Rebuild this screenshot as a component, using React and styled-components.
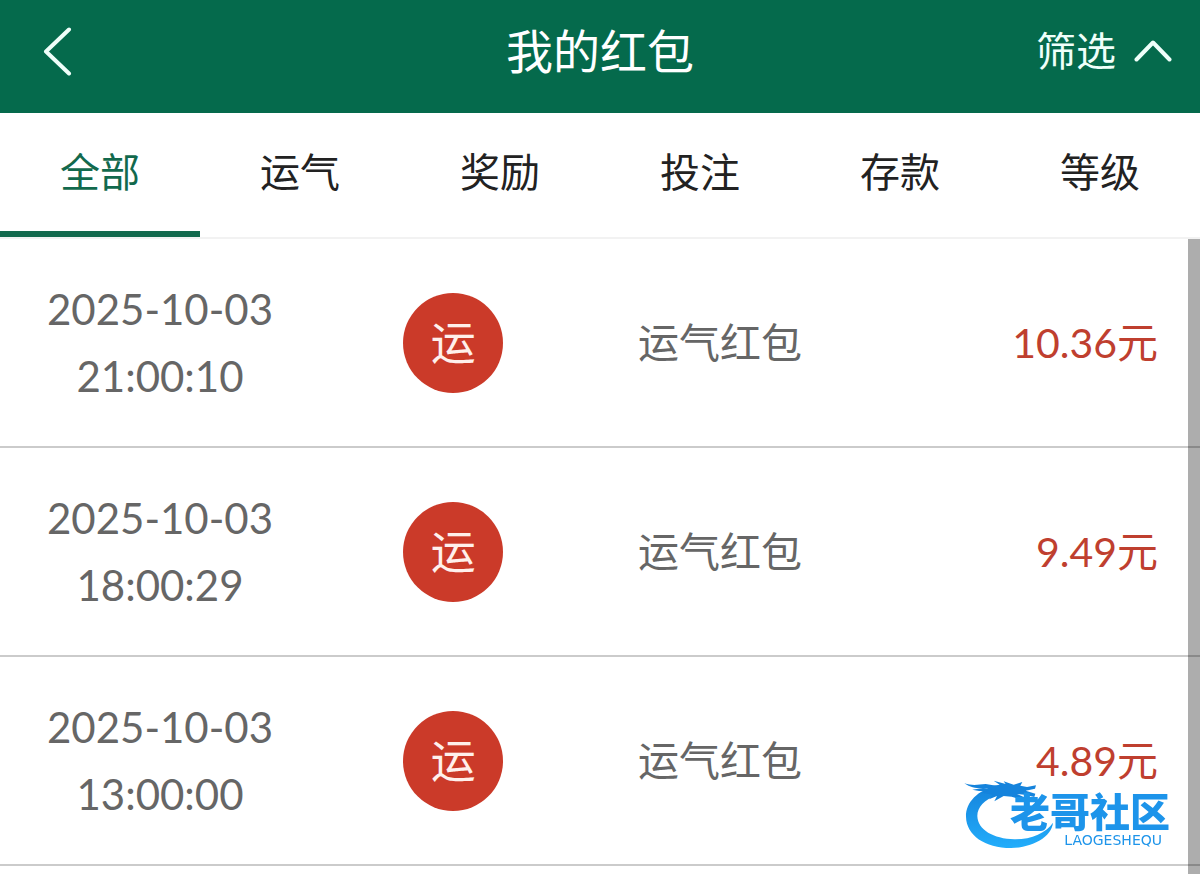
import React, { useState } from 'react'
import styled, { createGlobalStyle } from 'styled-components'

const tabs = ['全部', '运气', '奖励', '投注', '存款', '等级']

const records = [
  { date: '2025-10-03', time: '21:00:10', badge: '运', name: '运气红包', amount: '10.36' },
  { date: '2025-10-03', time: '18:00:29', badge: '运', name: '运气红包', amount: '9.49' },
  { date: '2025-10-03', time: '13:00:00', badge: '运', name: '运气红包', amount: '4.89' }
]

const App = () => {
  const [active, setActive] = useState(tabs[0])

  return (
    <Page>
      <GlobalStyle />
      <Header>
        <BackButton type='button' aria-label='返回'>
          <svg width='30' height='50' viewBox='0 0 30 50'>
            <path d='M26 3.5 3 25.5 26 47.5' />
          </svg>
        </BackButton>
        <Title>我的红包</Title>
        <FilterButton type='button'>
          筛选
          <svg width='38' height='24' viewBox='0 0 38 24'>
            <path d='M2.5 20.5 19 3.5 35.5 20.5' />
          </svg>
        </FilterButton>
      </Header>
      <Tabs>
        {tabs.map(tab => (
          <Tab
            key={tab}
            type='button'
            $active={tab === active}
            onClick={() => setActive(tab)}
          >
            {tab}
          </Tab>
        ))}
      </Tabs>
      <Content>
        <List>
          {records.map(item => (
            <Row key={item.time}>
              <DateTime>
                <span>{item.date}</span>
                <span>{item.time}</span>
              </DateTime>
              <Badge>{item.badge}</Badge>
              <Name>{item.name}</Name>
              <Amount>{item.amount}元</Amount>
            </Row>
          ))}
        </List>
        <ScrollThumb />
      </Content>
      <Watermark>
        <Dragon />
        <Brand>
          <BrandName>老哥社区</BrandName>
          <BrandLatin>LAOGESHEQU</BrandLatin>
        </Brand>
      </Watermark>
    </Page>
  )
}

const Dragon = () => (
  <DragonSvg viewBox='60 145 280 210' aria-hidden='true'>
    <defs>
      <linearGradient id='dragon' x1='0' y1='0' x2='0' y2='1'>
        <stop offset='0' stopColor='#1583dc' />
        <stop offset='1' stopColor='#22adfb' />
      </linearGradient>
    </defs>
    <g fill='url(#dragon)'>
      <path d='M160 166C108 178 70 214 71 258C72 314 128 352 206 352C272 350 328 318 332 276C312 306 266 327 216 326C154 324 106 298 105 256C105 230 126 208 162 194L184 182Z' />
    </g>
    <g fill='#1583dc'>
      <path d='M120 186 148 166 172 162 154 150 190 160 184 152 214 162 240 154 234 165 254 169 281 164 278 174 250 180 279 189 276 199 246 192 224 190 246 200 238 207 208 198 184 196 156 212 164 196 140 206 150 192Z' />
      <path d='M66 158C90 166 108 162 130 160L166 166 158 178 134 172C112 174 88 174 66 158Z' />
      <path d='M90 177 122 172 150 174 130 182 110 181Z' />
    </g>
  </DragonSvg>
)

/* Styling */

const GlobalStyle = createGlobalStyle`
  * {
    box-sizing: border-box;
  }

  body {
    margin: 0;
    background: #fff;
    font-family: Lato, "Noto Sans CJK SC", sans-serif;
  }

  button {
    border: none;
    padding: 0;
    background: none;
    font-family: inherit;
    cursor: pointer;
  }
`

const Page = styled.div`
  display: flex;
  flex-direction: column;
  min-height: 100vh;
`

const Header = styled.header`
  display: grid;
  grid-template-columns: 1fr auto 1fr;
  align-items: center;
  height: 113px;
  padding: 0 28px 12px;
  background: #056a4c;
  color: #fff;

  svg {
    display: block;
    fill: none;
    stroke: #effffa;
    stroke-width: 4;
    stroke-linecap: round;
    stroke-linejoin: round;
  }
`

const BackButton = styled.button`
  justify-self: start;
  padding: 0 15px;
`

const Title = styled.h1`
  margin: 0;
  font-size: 47px;
  font-weight: 400;
  line-height: 60px;
`

const FilterButton = styled.button`
  display: flex;
  align-items: center;
  justify-self: end;
  gap: 18px;
  color: #effffa;
  font-size: 40px;
  line-height: 60px;
`

const Tabs = styled.nav`
  display: flex;
  border-bottom: 2px solid #f2f2f2;
`

const Tab = styled.button`
  flex: 1;
  padding: 32px 0;
  border-bottom: 6px solid ${props => (props.$active ? '#12694d' : 'transparent')};
  color: ${props => (props.$active ? '#12694d' : '#222')};
  font-size: 40px;
  line-height: 54px;
`

const Content = styled.main`
  position: relative;
  flex: 1;
`

const List = styled.ul`
  margin: 0;
  padding: 0;
  list-style: none;
`

const Row = styled.li`
  display: grid;
  grid-template-columns: 24fr 20fr 20fr 26fr;
  align-items: center;
  justify-items: center;
  padding: 37px 0 36px;
  border-bottom: 2px solid #cbcbcb;
  color: #666;
`

const DateTime = styled.div`
  display: flex;
  flex-direction: column;
  align-items: center;
  font-size: 42px;
  line-height: 67px;
`

const Badge = styled.span`
  display: flex;
  align-items: center;
  justify-content: center;
  width: 100px;
  height: 100px;
  border-radius: 50%;
  background: #cb3a29;
  color: #fff0ec;
  font-size: 45px;
  line-height: 60px;
`

const Name = styled.span`
  font-size: 41px;
  line-height: 60px;
`

const Amount = styled.span`
  justify-self: end;
  padding-right: 42px;
  color: #bf3f2f;
  font-size: 41px;
  line-height: 60px;
`

const ScrollThumb = styled.div`
  position: absolute;
  top: 0;
  right: 0;
  bottom: 0;
  width: 12px;
  background: rgba(0, 0, 0, 0.32);
`

const Watermark = styled.div`
  position: fixed;
  right: 30px;
  bottom: 25px;
  display: flex;
  align-items: flex-end;
`

const DragonSvg = styled.svg`
  flex: none;
  width: 94px;
  height: 70px;
`

const Brand = styled.div`
  display: flex;
  flex-direction: column;
  align-items: flex-end;
  margin-left: -46px;
  color: #1d94ea;
`

const BrandName = styled.strong`
  font-size: 40px;
  font-weight: 900;
  line-height: 38px;
`

const BrandLatin = styled.small`
  padding: 2px 8px;
  font-family: "DejaVu Sans", sans-serif;
  font-size: 14px;
  line-height: 14px;
`

/* End of Styling */
export default App
